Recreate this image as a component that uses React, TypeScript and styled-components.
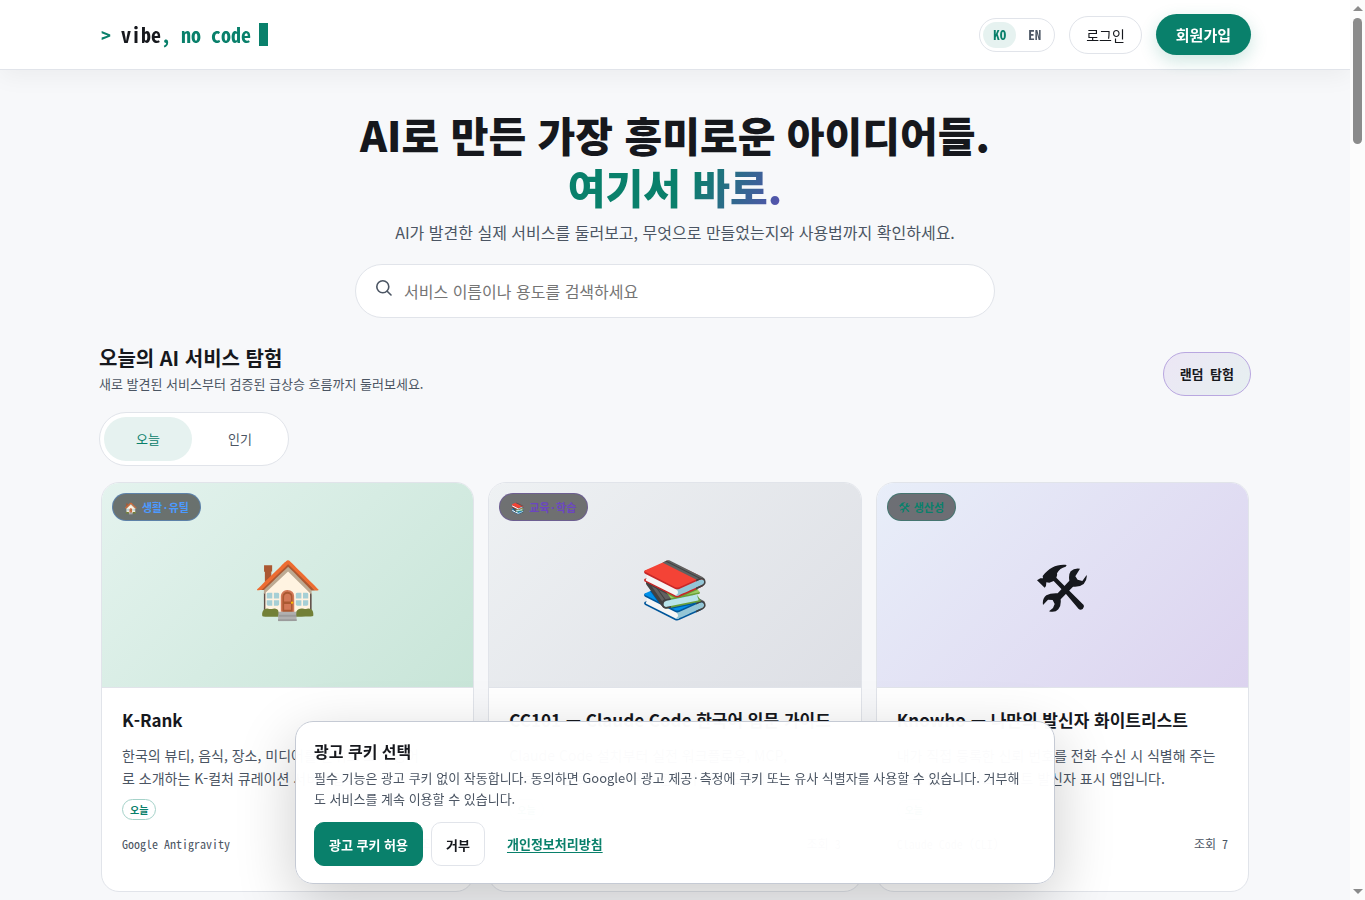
import React, { useState } from "react";
import styled, { createGlobalStyle } from "styled-components";

const mono = `"Noto Sans Mono CJK KR", "Noto Sans CJK KR", monospace`;

const c = {
  ink: "#16181d",
  muted: "#4b5563",
  line: "#e1e4ea",
  bg: "#f7f8fa",
  green: "#09806b",
  mint: "#e6f2f0",
};

const GlobalStyle = createGlobalStyle`
  *, *::before, *::after { box-sizing: border-box; }
  body {
    margin: 0;
    color: ${c.ink};
    background: ${c.bg};
    font-family: "Noto Sans CJK KR", sans-serif;
    font-size: 16px;
    line-height: 24px;
  }
  button, input { font-family: inherit; }
  h1, h2, h3, p { margin: 0; }
`;

const Shell = styled.div`
  height: 100vh;
  display: flex;
`;

const Page = styled.div`
  position: relative;
  flex: 1;
  min-width: 0;
`;

const Scroller = styled.div`
  height: 100%;
  overflow-y: auto;
  scrollbar-width: none;
`;

const ScrollTrack = styled.div`
  width: 15px;
  padding: 6px 0;
  display: flex;
  flex-direction: column;
  align-items: center;
  background: #fcfcfc;
`;

const ScrollArrow = styled.svg`
  flex: none;
  display: block;
  fill: #8b8b8b;
`;

const ScrollThumb = styled.div`
  width: 9px;
  height: 126px;
  margin: 7px 0 auto;
  border-radius: 5px;
  background: #8b8b8b;
`;

const Header = styled.header`
  position: sticky;
  top: 0;
  z-index: 5;
  background: #fff;
  border-bottom: 1px solid ${c.line};
  box-shadow: 0 6px 24px rgba(22, 24, 29, 0.05);
`;

const HeaderInner = styled.div`
  max-width: 1200px;
  margin: 0 auto;
  padding: 14px 24px;
  display: flex;
  align-items: center;
  justify-content: space-between;
`;

const Logo = styled.a`
  display: flex;
  align-items: center;
  gap: 8px;
  padding-left: 2px;
  font-family: ${mono};
  font-size: 20px;
  font-weight: 700;
  line-height: 24px;
  white-space: pre;
  color: ${c.green};
  text-decoration: none;
`;

const LogoInk = styled.span`
  color: ${c.ink};
`;

const Cursor = styled.span`
  width: 9px;
  height: 23px;
  background: ${c.green};
`;

const HeaderActions = styled.nav`
  display: flex;
  align-items: center;
  gap: 14px;
`;

const LangSwitch = styled.div`
  display: flex;
  gap: 2px;
  padding: 3px;
  border: 1px solid ${c.line};
  border-radius: 999px;
`;

const LangButton = styled.button<{ $active?: boolean }>`
  height: 26px;
  padding: 0 10px;
  border: 0;
  border-radius: 999px;
  font-family: ${mono};
  font-size: 13px;
  font-weight: 700;
  color: ${(p) => (p.$active ? c.green : c.muted)};
  background: ${(p) => (p.$active ? c.mint : "transparent")};
`;

const LoginLink = styled.a`
  padding: 6px 16px;
  border: 1px solid ${c.line};
  border-radius: 999px;
  font-size: 14px;
  color: ${c.ink};
  text-decoration: none;
`;

const JoinLink = styled.a`
  padding: 8px 20px;
  border-radius: 999px;
  font-size: 15px;
  font-weight: 700;
  line-height: 25px;
  color: #fff;
  background: ${c.green};
  box-shadow: 0 6px 18px rgba(9, 128, 107, 0.2);
  text-decoration: none;
`;

const Main = styled.main`
  max-width: 1200px;
  margin: 0 auto;
  padding: 38px 24px 40px;
`;

const Hero = styled.section`
  display: flex;
  flex-direction: column;
  align-items: center;
  text-align: center;
`;

const HeroTitle = styled.h1`
  font-size: 41px;
  font-weight: 900;
  line-height: 52px;
`;

const HeroAccent = styled.span`
  display: block;
  width: fit-content;
  margin: 0 auto;
  color: transparent;
  background: linear-gradient(115deg, ${c.green} 55%, #6b46c1 110%);
  background-clip: text;
`;

const HeroText = styled.p`
  margin-top: 7px;
  font-size: 16px;
  line-height: 26px;
  color: ${c.muted};
`;

const SearchBox = styled.label`
  width: 100%;
  max-width: 640px;
  height: 54px;
  margin-top: 19px;
  padding: 0 20px;
  display: flex;
  gap: 12px;
  border: 1px solid ${c.line};
  border-radius: 999px;
  background: #fff;
`;

const SearchIcon = styled.svg`
  flex: none;
  margin-top: 15px;
  color: ${c.muted};
`;

const SearchInput = styled.input`
  flex: 1;
  min-width: 0;
  border: 0;
  padding: 0;
  outline: 0;
  font-size: 16px;
  background: transparent;
  &::placeholder { color: #757575; }
`;

const ExploreHead = styled.div`
  margin-top: 26px;
  display: flex;
  align-items: flex-end;
  justify-content: space-between;
`;

const ExploreTitle = styled.h2`
  font-size: 20px;
  font-weight: 700;
  line-height: 28px;
`;

const ExploreText = styled.p`
  font-size: 13px;
  line-height: 24px;
  color: ${c.muted};
`;

const RandomButton = styled.button`
  height: 44px;
  padding: 0 16px 2px;
  border: 1px solid #b9a7e0;
  border-radius: 999px;
  font-family: ${mono};
  font-size: 13px;
  font-weight: 700;
  color: ${c.ink};
  background: linear-gradient(135deg, #ece6f5, #e6f0f0);
`;

const Tabs = styled.div`
  width: fit-content;
  margin-top: 16px;
  padding: 4px;
  display: flex;
  gap: 4px;
  border: 1px solid ${c.line};
  border-radius: 999px;
  background: #fff;
`;

const Tab = styled.button<{ $active?: boolean }>`
  width: 88px;
  height: 44px;
  padding: 0 0 2px;
  border: 0;
  border-radius: 999px;
  font-size: 13px;
  color: ${(p) => (p.$active ? c.green : c.muted)};
  background: ${(p) => (p.$active ? c.mint : "transparent")};
`;

const Cards = styled.div`
  margin-top: 16px;
  padding: 0 2px;
  display: grid;
  grid-template-columns: repeat(3, minmax(0, 1fr));
  gap: 14px;
`;

const Card = styled.article`
  position: relative;
  min-height: 410px;
  display: flex;
  flex-direction: column;
  border: 1px solid ${c.line};
  border-radius: 18px;
  overflow: hidden;
  background: #fff;
`;

const Thumb = styled.div<{ $from: string; $to: string }>`
  height: 205px;
  display: grid;
  place-items: center;
  border-bottom: 1px solid ${c.line};
  font-size: 56px;
  line-height: 80px;
  background: linear-gradient(135deg, ${(p) => p.$from}, ${(p) => p.$to});
`;

const Badge = styled.span<{ $color: string }>`
  position: absolute;
  top: 10px;
  left: 10px;
  padding: 0 11px;
  display: flex;
  align-items: center;
  gap: 4px;
  border: 1px solid color-mix(in srgb, ${(p) => p.$color} 40%, transparent);
  border-radius: 999px;
  font-size: 11px;
  font-weight: 700;
  line-height: 26px;
  color: ${(p) => p.$color};
  background: rgba(20, 20, 20, 0.58);
`;

const CardBody = styled.div`
  flex: 1;
  padding: 18px 20px;
`;

const CardTitle = styled.h3`
  font-size: 17px;
  font-weight: 700;
  line-height: 28px;
  white-space: nowrap;
`;

const CardText = styled.p`
  height: 46px;
  margin-top: 10px;
  font-size: 14px;
  line-height: 23px;
  white-space: pre-line;
  color: ${c.muted};
`;

const Tag = styled.span`
  display: block;
  width: fit-content;
  margin-top: 9px;
  padding: 0 7px;
  border: 1px solid #a5d2c9;
  border-radius: 999px;
  font-size: 10px;
  font-weight: 700;
  line-height: 19px;
  color: ${c.green};
`;

const CardMeta = styled.div`
  margin-top: 14px;
  display: flex;
  justify-content: space-between;
  font-family: ${mono};
  font-size: 12px;
  line-height: 20px;
  color: ${c.muted};
`;

const CookieBanner = styled.section`
  position: absolute;
  z-index: 10;
  bottom: 16px;
  left: 0;
  right: 0;
  width: 760px;
  max-width: calc(100% - 32px);
  margin: 0 auto;
  padding: 16px 18px 17px;
  border: 1px solid #c5cad4;
  border-radius: 18px;
  background: rgba(255, 255, 255, 0.98);
  box-shadow: 0 18px 60px rgba(0, 0, 0, 0.2);
`;

const CookieTitle = styled.h2`
  font-size: 16px;
  font-weight: 700;
  line-height: 26px;
`;

const CookieText = styled.p`
  max-width: 712px;
  margin-top: 3px;
  font-size: 13px;
  line-height: 21px;
  color: ${c.muted};
`;

const CookieActions = styled.div`
  margin-top: 13px;
  display: flex;
  gap: 8px;
`;

const CookieButton = styled.button<{ $primary?: boolean }>`
  height: 44px;
  padding: 0 14px;
  border: 1px solid ${(p) => (p.$primary ? c.green : c.line)};
  border-radius: 10px;
  font-size: 13px;
  font-weight: 700;
  color: ${(p) => (p.$primary ? "#fff" : c.ink)};
  background: ${(p) => (p.$primary ? c.green : "#fff")};
`;

const PolicyLink = styled.a`
  padding: 0 14px;
  font-size: 13px;
  font-weight: 700;
  line-height: 44px;
  color: ${c.green};
  text-underline-offset: 3px;
`;

function ToolsIcon({ size }: { size: number }) {
  return (
    <svg width={size} height={size} viewBox="0 0 150 146" fill="currentColor" aria-hidden="true">
      <path d="M89 1C60 -2 38 8 17 34L18 41L10 41L0 47L23 69L27 64L28 53L37 54L50 49L76 76L89 90L125 133Q130 138 137 133Q143 126 140 121L88 69L58 39Q62 32 60 26Q68 10 86 6Z" />
      <path d="M129 12Q112 9 101 20Q94 30 97 48L62 86Q40 85 28 92Q15 103 18 121L33 105L47 106L53 118L48 130L36 140Q54 145 64 134Q73 124 71 104L108 66Q128 68 140 58Q151 46 149 31L136 49L122 45L115 35Z" />
    </svg>
  );
}

const ThumbDrawing = styled.span`
  display: flex;
  padding-top: 8px;
`;

const services = [
  {
    icon: "🏠", category: "생활·유틸", color: "#4c9aff", from: "#e4f3ee", to: "#c8e5d8",
    title: "K-Rank",
    text: "한국의 뷰티, 음식, 장소, 미디어를 순위로 모아 영어\n로 소개하는 K-컬처 큐레이션 서비스입니다.",
    tool: "Google Antigravity", views: 5,
  },
  {
    icon: "📚", category: "교육·학습", color: "#6b46c1", from: "#eef1f3", to: "#dddfe5",
    title: "CC101 — Claude Code 한국어 입문 가이드",
    text: "Claude Code 설치부터 실전 워크플로우, MCP,\n서브에이전트까지 배우는 한국어 가이드입니다.",
    tool: "Claude Code", views: 3,
  },
  {
    icon: null, category: "생산성", color: "#09806b", from: "#e8eef9", to: "#dcd3ef",
    title: "Knowho — 나만의 발신자 화이트리스트",
    text: "내가 직접 등록한 신뢰 번호를 전화 수신 시 식별해 주는\n번호 관리 화이트리스트 발신자 표시 앱입니다.",
    tool: "Claude Code (CLI)", views: 7,
  },
];

export default function App() {
  const [tab, setTab] = useState("오늘");
  return (
    <Shell lang="ko">
      <GlobalStyle />
      <Page>
        <Scroller>
          <Header>
            <HeaderInner>
              <Logo href="#">
                <span>&gt; <LogoInk>vibe</LogoInk>, no code</span>
                <Cursor />
              </Logo>
              <HeaderActions>
                <LangSwitch>
                  <LangButton $active>KO</LangButton>
                  <LangButton>EN</LangButton>
                </LangSwitch>
                <LoginLink href="#">로그인</LoginLink>
                <JoinLink href="#">회원가입</JoinLink>
              </HeaderActions>
            </HeaderInner>
          </Header>
          <Main>
            <Hero>
              <HeroTitle>
                AI로 만든 가장 흥미로운 아이디어들.
                <HeroAccent>여기서 바로.</HeroAccent>
              </HeroTitle>
              <HeroText>AI가 발견한 실제 서비스를 둘러보고, 무엇으로 만들었는지와 사용법까지 확인하세요.</HeroText>
              <SearchBox>
                <SearchIcon width="16" height="16" viewBox="0 0 16 16" fill="none" stroke="currentColor" strokeWidth="1.6" strokeLinecap="round">
                  <circle cx="6.8" cy="6.8" r="6" />
                  <path d="M11.2 11.2 15 15" />
                </SearchIcon>
                <SearchInput type="search" aria-label="서비스 검색" placeholder="서비스 이름이나 용도를 검색하세요" />
              </SearchBox>
            </Hero>
            <ExploreHead>
              <div>
                <ExploreTitle>오늘의 AI 서비스 탐험</ExploreTitle>
                <ExploreText>새로 발견된 서비스부터 검증된 급상승 흐름까지 둘러보세요.</ExploreText>
              </div>
              <RandomButton>랜덤 탐험</RandomButton>
            </ExploreHead>
            <Tabs>
              {["오늘", "인기"].map((name) => (
                <Tab key={name} $active={name === tab} onClick={() => setTab(name)}>{name}</Tab>
              ))}
            </Tabs>
            <Cards>
              {services.map((s) => (
                <Card key={s.title}>
                  <Thumb $from={s.from} $to={s.to}>
                    {s.icon ?? <ThumbDrawing><ToolsIcon size={50} /></ThumbDrawing>}
                  </Thumb>
                  <Badge lang="" $color={s.color}>
                    {s.icon ? <span>{s.icon}</span> : <ToolsIcon size={11} />}
                    {s.category}
                  </Badge>
                  <CardBody>
                    <CardTitle>{s.title}</CardTitle>
                    <CardText>{s.text}</CardText>
                    <Tag>오늘</Tag>
                    <CardMeta>
                      <span>{s.tool}</span>
                      <span>조회 {s.views}</span>
                    </CardMeta>
                  </CardBody>
                </Card>
              ))}
            </Cards>
          </Main>
        </Scroller>
        <CookieBanner aria-label="광고 쿠키 선택">
          <CookieTitle>광고 쿠키 선택</CookieTitle>
          <CookieText>
            필수 기능은 광고 쿠키 없이 작동합니다. 동의하면 Google이 광고 제공<span lang="">·</span>측정에 쿠키 또는 유사 식별자를 사용할 수 있습니다. 거부해도 서비스를 계속 이용할 수 있습니다.
          </CookieText>
          <CookieActions>
            <CookieButton $primary>광고 쿠키 허용</CookieButton>
            <CookieButton>거부</CookieButton>
            <PolicyLink href="#">개인정보처리방침</PolicyLink>
          </CookieActions>
        </CookieBanner>
      </Page>
      <ScrollTrack aria-hidden="true">
        <ScrollArrow width="10" height="5" viewBox="0 0 10 5"><path d="M0 5 5 0 10 5Z" /></ScrollArrow>
        <ScrollThumb />
        <ScrollArrow width="10" height="5" viewBox="0 0 10 5"><path d="M0 0 5 5 10 0Z" /></ScrollArrow>
      </ScrollTrack>
    </Shell>
  );
}
